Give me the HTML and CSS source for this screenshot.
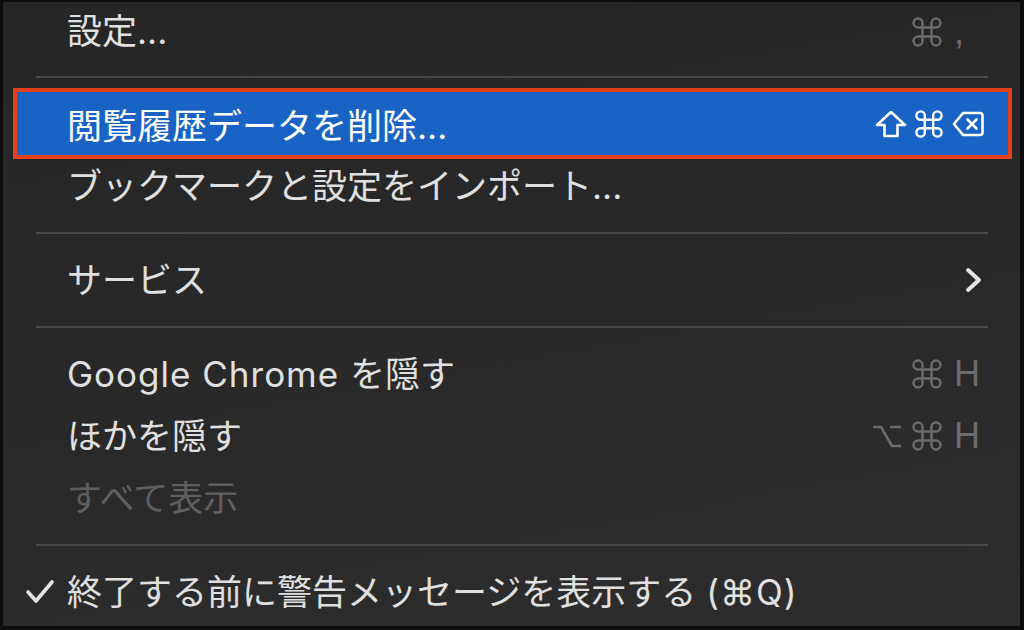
FILE: index.html
```html
<!DOCTYPE html>
<html lang="ja">
<head>
<meta charset="utf-8">
<link rel="stylesheet" href="styles.css">
</head>
<body>
<svg class="defs" width="0" height="0" aria-hidden="true">
  <defs>
    <path id="cmd" d="M15 6v12a3 3 0 1 0 3-3H6a3 3 0 1 0 3 3V6a3 3 0 1 0-3 3h12a3 3 0 1 0-3-3"/>
  </defs>
</svg>
<div class="menu">
  <div class="row row-first">
    <span class="label">設定...</span>
    <span class="sc">
      <svg class="ic cmd" viewBox="2 2 20 20"><use href="#cmd"/></svg>
      <span class="key">,</span>
    </span>
  </div>
  <div class="sep sep-first"><i></i></div>
  <div class="hl-wrap">
    <div class="row hl">
      <span class="label">閲覧履歴データを削除...</span>
      <span class="sc">
        <svg class="ic shift" viewBox="0 0 32 28"><path d="M16 2 L30 15 H22.5 V26 H9.5 V15 H2 Z"/></svg>
        <svg class="ic cmd hcmd" viewBox="2 2 20 20"><use href="#cmd"/></svg>
        <svg class="ic del" viewBox="0 0 32 26"><path d="M11 2 H28 A2.5 2.5 0 0 1 30.5 4.5 V21.5 A2.5 2.5 0 0 1 28 24 H11 L2 13 Z"/><path d="M15.5 8.5 L24.5 17.5 M24.5 8.5 L15.5 17.5"/></svg>
      </span>
    </div>
  </div>
  <div class="row">
    <span class="label">ブックマークと設定をインポート...</span>
  </div>
  <div class="sep"><i></i></div>
  <div class="row">
    <span class="label">サービス</span>
    <svg class="chev" viewBox="0 0 18 26"><path d="M3 3 L14 13 L3 23"/></svg>
  </div>
  <div class="sep"><i></i></div>
  <div class="row">
    <span class="label"><span class="latin">Google Chrome </span>を隠す</span>
    <span class="sc">
      <svg class="ic cmd" viewBox="2 2 20 20"><use href="#cmd"/></svg>
      <span class="key">H</span>
    </span>
  </div>
  <div class="row">
    <span class="label">ほかを隠す</span>
    <span class="sc">
      <svg class="ic opt" viewBox="0 0 30 26"><path d="M1 4 H9 L20 23 H29 M18 4 H29"/></svg>
      <svg class="ic cmd" viewBox="2 2 20 20"><use href="#cmd"/></svg>
      <span class="key">H</span>
    </span>
  </div>
  <div class="row">
    <span class="label disabled">すべて表示</span>
  </div>
  <div class="sep"><i></i></div>
  <div class="row row-check">
    <svg class="check" viewBox="0 0 30 26"><path d="M3 13 L11 22 L27 3"/></svg>
    <span class="label">終了する前に警告メッセージを表示する <span class="latin">(⌘Q)</span></span>
  </div>
</div>
</body>
</html>
```
FILE: styles.css
```css
html, body {
  margin: 0;
  padding: 0;
}
body {
  width: 1024px;
  height: 630px;
  background: #0d0d0d;
  padding: 2px 4px 4px 3px;
  box-sizing: border-box;
  overflow: hidden;
  font-family: "Inter", "Noto Sans CJK JP", "DejaVu Sans", sans-serif;
}
.defs {
  position: absolute;
}
.menu {
  height: 624px;
  background: linear-gradient(170deg, #262626 0%, #282828 45%, #2d2d2e 100%);
  display: flex;
  flex-direction: column;
  color: #e0e0e0;
  font-size: 35px;
}
.row {
  height: 62px;
  flex: none;
  display: flex;
  align-items: center;
  padding: 0 36px 0 64px;
  box-sizing: border-box;
}
.row-first {
  height: 59px;
}
.label {
  flex: 1;
  white-space: nowrap;
  line-height: 1;
  position: relative;
  top: 0;
}
.latin {
  letter-spacing: 1px;
}
.disabled {
  color: #5f5f5f;
}
.sep {
  height: 32px;
  flex: none;
  display: flex;
  align-items: center;
  padding: 0 32px 0 33px;
}
.sep-first {
  height: 31px;
}
.sep i {
  display: block;
  width: 100%;
  height: 2px;
  background: #484848;
}
.hl-wrap {
  height: 63px;
  flex: none;
  display: flex;
  flex-direction: column;
  justify-content: center;
}
.row.hl {
  height: 71px;
  margin: -4px 8px -4px 10px;
  border: 4px solid #e3401c;
  background: #1863c4;
  color: #ffffff;
  padding: 0 24px 0 50px;
}
.hl .label {
  top: 3px;
}
.sc {
  display: flex;
  align-items: center;
  color: #6c6c6c;
}
.ic {
  fill: none;
  stroke: currentColor;
  stroke-linecap: round;
  stroke-linejoin: round;
}
.cmd {
  width: 30px;
  height: 30px;
  stroke-width: 1.6;
}
.key {
  width: 30px;
  margin-left: 12px;
  font-family: "Liberation Sans", "DejaVu Sans", sans-serif;
  font-size: 36px;
  line-height: 1;
}
.hl .sc {
  color: #ffffff;
}
.shift {
  width: 32px;
  height: 28px;
  stroke-width: 2.6;
  margin-right: 8px;
}
.hcmd {
  width: 28px;
  height: 28px;
  stroke-width: 1.7;
  margin-right: 9px;
}
.del {
  width: 32px;
  height: 26px;
  stroke-width: 2.6;
}
.opt {
  width: 30px;
  height: 26px;
  stroke-width: 2.6;
  margin-right: 10px;
  stroke-linecap: butt;
  stroke-linejoin: miter;
}
.chev {
  width: 18px;
  height: 26px;
  fill: none;
  stroke: #e4e4e4;
  stroke-width: 4;
  stroke-linecap: round;
  stroke-linejoin: round;
  margin-right: 1px;
}
.row-check {
  padding-left: 22px;
}
.check {
  width: 30px;
  height: 26px;
  fill: none;
  stroke: #e4e4e4;
  stroke-width: 3.6;
  stroke-linecap: round;
  stroke-linejoin: round;
  margin-right: 12px;
  flex: none;
}
```
